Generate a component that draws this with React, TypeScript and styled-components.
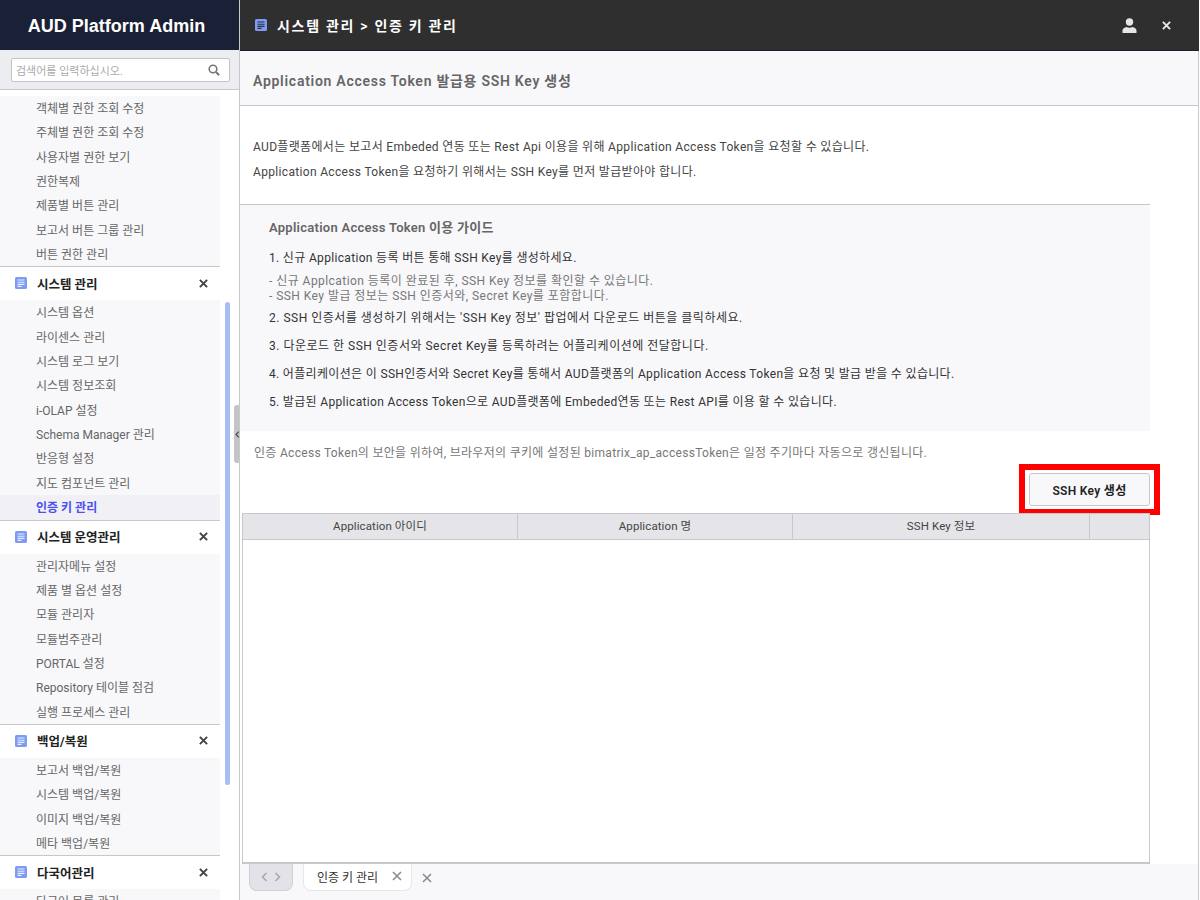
import styled, { createGlobalStyle } from "styled-components";

const GlobalStyle = createGlobalStyle`
  html, body {
    margin: 0;
    padding: 0;
    height: 100%;
    overflow: hidden;
    background: #fff;
  }
  * {
    box-sizing: border-box;
  }
  body {
    font-family: Roboto, "Noto Sans CJK KR", sans-serif;
    font-size: 12px;
    color: #333;
  }
  ul, ol {
    list-style: none;
    margin: 0;
    padding: 0;
  }
  p, h1, h2, h3 {
    margin: 0;
  }
`;

const Layout = styled.div`
  display: flex;
  width: 1199px;
  height: 900px;
  overflow: hidden;
`;

const Sidebar = styled.aside`
  position: relative;
  flex: 0 0 240px;
  display: flex;
  flex-direction: column;
  border-right: 1px solid #c8c8cc;
  overflow: hidden;
`;

const Brand = styled.div`
  flex: 0 0 50px;
  display: flex;
  align-items: center;
  justify-content: center;
  padding: 2px 6px 0 0;
  background: #1a2035;
  color: #fff;
  font-family: "Liberation Sans", Arial, sans-serif;
  font-size: 18px;
  font-weight: 700;
`;

const SearchArea = styled.div`
  flex: 0 0 40px;
  padding: 8px 9px 7px 11px;
  background: #ecedf1;
  border-bottom: 1px solid #c8c8cc;
`;

const SearchBox = styled.div`
  height: 24px;
  display: flex;
  align-items: center;
  justify-content: space-between;
  padding: 0 9px 0 4px;
  background: #fff;
  border: 1px solid #c4c4c8;
  border-radius: 2px;
  color: #aaa;
  font-size: 11px;
`;

const MenuScroll = styled.div`
  padding-top: 6px;
`;

const SubList = styled.ul`
  width: 220px;
  background: #f8f8fb;
`;

const SubItem = styled.li<{ $active?: boolean }>`
  height: 24.35px;
  line-height: 26px;
  padding-left: 36px;
  font-size: 12px;
  white-space: nowrap;
  color: ${(p) => (p.$active ? "#4a50f0" : "#666")};
  font-weight: ${(p) => (p.$active ? 600 : 400)};
  background: ${(p) => (p.$active ? "#f1f1f5" : "transparent")};
`;

const GroupHeader = styled.div`
  width: 220px;
  height: 34px;
  display: flex;
  align-items: center;
  gap: 10px;
  padding: 0 12px 1px 15px;
  background: #fff;
  border-top: 1px solid #c8c8cc;
  color: #222;
  font-size: 12.5px;
  font-weight: 700;
`;

const GroupName = styled.span`
  flex: 1;
`;

const ScrollThumb = styled.div`
  position: absolute;
  left: 225px;
  top: 302px;
  width: 5px;
  height: 483px;
  background: #a9bdf5;
  border-radius: 3px;
`;

const CollapseHandle = styled.div`
  position: absolute;
  left: 234px;
  top: 405px;
  width: 6px;
  height: 58px;
  display: flex;
  align-items: center;
  justify-content: center;
  background: #c4c4c8;
  border-radius: 3px 0 0 3px;
`;

const Main = styled.main`
  flex: 1;
  min-width: 0;
  display: flex;
  flex-direction: column;
`;

const TopBar = styled.header`
  flex: 0 0 51px;
  display: flex;
  align-items: center;
  gap: 10px;
  padding: 0 28px 0 15px;
  background: #2f2f2f;
  border-bottom: 1px solid #1a2035;
  color: #fff;
  font-size: 14px;
  font-weight: 600;
`;

const Crumb = styled.span`
  flex: 1;
  letter-spacing: 1.7px;
`;

const TopIcons = styled.div`
  display: flex;
  align-items: center;
  gap: 25px;
`;

const Body = styled.div`
  flex: 1;
  min-height: 0;
  display: flex;
  flex-direction: column;
  border-right: 1px solid #c8c8cc;
`;

const TitleRow = styled.div`
  flex: 0 0 55px;
  display: flex;
  align-items: center;
  padding: 4px 12px 0 13px;
  background: #f8f8fb;
  border-bottom: 1px solid #c8c8cc;
  color: #666;
  font-size: 14px;
  font-weight: 600;
  letter-spacing: 0.73px;
`;

const Content = styled.div`
  flex: 1;
  min-height: 0;
  display: flex;
  flex-direction: column;
  padding-right: 48px;
  letter-spacing: 0.33px;
`;

const Intro = styled.div`
  height: 99px;
  border-bottom: 1px solid #c8c8cc;
  padding: 29px 0 0 13px;
  color: #444;
  line-height: 25px;
  font-size: 12px;
`;

const Guide = styled.section`
  height: 226px;
  padding: 12px 0 0 29px;
  background: #f8f8fb;
`;

const GuideTitle = styled.h3`
  color: #666;
  font-size: 13px;
  font-weight: 600;
  line-height: 22px;
  margin-bottom: 10px;
  letter-spacing: 0.27px;
`;

const Step = styled.p<{ $wide?: boolean }>`
  color: #333;
  font-size: 12px;
  line-height: 18px;
  margin-bottom: 10px;
  letter-spacing: ${(p) => (p.$wide ? "0.5px" : "inherit")};
`;

const StepNote = styled.ul`
  color: #777;
  font-size: 12px;
  line-height: 15px;
  margin: -3px 0 5px;
  letter-spacing: 0.45px;
`;

const Note = styled.p`
  padding: 14px 0 0 14px;
  height: 33px;
  color: #777;
  font-size: 12px;
  line-height: 17px;
  letter-spacing: 0.3px;
`;

const Actions = styled.div`
  display: flex;
  justify-content: flex-end;
  margin-right: -10px;
`;

const Highlight = styled.div`
  display: flex;
  padding: 3px 4px 3px 4px;
  border: 6px solid #ff0000;
`;

const SmallButton = styled.button`
  width: 121px;
  height: 33px;
  background: #f8f8fb;
  border: 1px solid #c8c8cc;
  border-radius: 3px;
  color: #222;
  font-family: inherit;
  font-size: 12px;
  font-weight: 600;
  letter-spacing: 0.3px;
`;

const Table = styled.div`
  flex: 1;
  min-height: 0;
  margin-left: 2px;
  margin-top: -2px;
  border: 1px solid #c8c8cc;
  border-bottom: 2px solid #c8c8cc;
`;

const TableHead = styled.div`
  height: 26px;
  display: grid;
  grid-template-columns: 275px 275px 297px 1fr;
  background: #e4e4e9;
  border-bottom: 1px solid #c8c8cc;
`;

const HeadCell = styled.div`
  display: flex;
  align-items: center;
  justify-content: center;
  padding-bottom: 3px;
  border-right: 1px solid #c8c8cc;
  color: #444;
  font-size: 11.5px;
  letter-spacing: 0.1px;

  &:last-child {
    border-right: 0;
  }
`;

const TabBar = styled.footer`
  flex: 0 0 36px;
  display: flex;
  align-items: flex-start;
  padding-left: 9px;
  background: #f8f8fb;
`;

const TabNav = styled.div`
  width: 44px;
  height: 27px;
  display: flex;
  align-items: center;
  justify-content: center;
  gap: 6px;
  margin-right: 10px;
  background: #e2e2e8;
  border: 1px solid #d0d0d6;
  border-top: 0;
  border-radius: 0 0 8px 8px;
`;

const Tab = styled.div`
  width: 109px;
  height: 27px;
  display: flex;
  align-items: center;
  justify-content: space-between;
  padding: 0 9px 2px 13px;
  background: #fff;
  border: 1px solid #e6e6ea;
  border-top: 0;
  border-radius: 0 0 8px 8px;
  color: #333;
  font-size: 12px;
`;

const CloseAll = styled.div`
  height: 27px;
  display: flex;
  align-items: center;
  margin-left: 10px;
`;

function DocIcon({ line = "#e8edfd" }: { line?: string }) {
  return (
    <svg width="12" height="12" viewBox="0 0 12 12">
      <rect width="12" height="12" rx="1.5" fill="#7d9bf5" />
      <path d="M2.5 3h7M2.5 5.2h7M2.5 7.4h7M2.5 9.4h4" stroke={line} strokeWidth="1.1" />
    </svg>
  );
}

function CrossIcon({ size = 9, color = "#444", width = 2.2 }: { size?: number; color?: string; width?: number }) {
  return (
    <svg width={size} height={size} viewBox="0 0 10 10">
      <path d="M1 1l8 8M9 1l-8 8" stroke={color} strokeWidth={width} fill="none" />
    </svg>
  );
}

function SearchIcon() {
  return (
    <svg width="12" height="12" viewBox="0 0 12 12">
      <circle cx="5" cy="5" r="3.8" stroke="#777" strokeWidth="1.6" fill="none" />
      <path d="M8 8l3.2 3.2" stroke="#777" strokeWidth="2" />
    </svg>
  );
}

function UserIcon() {
  return (
    <svg width="15" height="15" viewBox="0 0 15 15">
      <circle cx="7.5" cy="4" r="3.7" fill="#e6e6e6" />
      <path d="M0.5 15v-2.4c0-2 2-3.2 4-3.6 1.6 1 4.4 1 6 0 2 .4 4 1.6 4 3.6V15z" fill="#e6e6e6" />
    </svg>
  );
}

function Chevron({ dir, color, size = 10 }: { dir: "left" | "right"; color: string; size?: number }) {
  return (
    <svg width={size * 0.7} height={size} viewBox="0 0 7 10">
      <path d={dir === "left" ? "M5.5 1L1.5 5l4 4" : "M1.5 1l4 4-4 4"} stroke={color} strokeWidth="1.6" fill="none" />
    </svg>
  );
}

const menu = [
  {
    items: [
      "객체별 권한 조회 수정",
      "주체별 권한 조회 수정",
      "사용자별 권한 보기",
      "권한복제",
      "제품별 버튼 관리",
      "보고서 버튼 그룹 관리",
      "버튼 권한 관리",
    ],
  },
  {
    title: "시스템 관리",
    items: [
      "시스템 옵션",
      "라이센스 관리",
      "시스템 로그 보기",
      "시스템 정보조회",
      "i-OLAP 설정",
      "Schema Manager 관리",
      "반응형 설정",
      "지도 컴포넌트 관리",
      "인증 키 관리",
    ],
  },
  {
    title: "시스템 운영관리",
    items: [
      "관리자메뉴 설정",
      "제품 별 옵션 설정",
      "모듈 관리자",
      "모듈범주관리",
      "PORTAL 설정",
      "Repository 테이블 점검",
      "실행 프로세스 관리",
    ],
  },
  {
    title: "백업/복원",
    items: ["보고서 백업/복원", "시스템 백업/복원", "이미지 백업/복원", "메타 백업/복원"],
  },
  {
    title: "다국어관리",
    items: ["다국어 목록 관리"],
  },
];

const columns = ["Application 아이디", "Application 명", "SSH Key 정보", ""];

function App() {
  return (
    <Layout>
      <GlobalStyle />
      <Sidebar>
        <Brand>AUD Platform Admin</Brand>
        <SearchArea>
          <SearchBox>
            검색어를 입력하십시오.
            <SearchIcon />
          </SearchBox>
        </SearchArea>
        <MenuScroll>
          {menu.map((group, i) => (
            <div key={i}>
              {group.title && (
                <GroupHeader>
                  <DocIcon />
                  <GroupName>{group.title}</GroupName>
                  <CrossIcon />
                </GroupHeader>
              )}
              <SubList>
                {group.items.map((item) => (
                  <SubItem key={item} $active={item === "인증 키 관리"}>
                    {item}
                  </SubItem>
                ))}
              </SubList>
            </div>
          ))}
        </MenuScroll>
        <ScrollThumb />
        <CollapseHandle>
          <Chevron dir="left" color="#444" size={7} />
        </CollapseHandle>
      </Sidebar>
      <Main>
        <TopBar>
          <DocIcon line="#2f2f2f" />
          <Crumb>시스템 관리 &gt; 인증 키 관리</Crumb>
          <TopIcons>
            <UserIcon />
            <CrossIcon size={9} color="#e6e6e6" />
          </TopIcons>
        </TopBar>
        <Body>
          <TitleRow>Application Access Token 발급용 SSH Key 생성</TitleRow>
          <Content>
            <Intro>
              <p>AUD플랫폼에서는 보고서 Embeded 연동 또는 Rest Api 이용을 위해 Application Access Token을 요청할 수 있습니다.</p>
              <p>Application Access Token을 요청하기 위해서는 SSH Key를 먼저 발급받아야 합니다.</p>
            </Intro>
            <Guide>
              <GuideTitle>Application Access Token 이용 가이드</GuideTitle>
              <Step>1. 신규 Application 등록 버튼 통해 SSH Key를 생성하세요.</Step>
              <StepNote>
                <li>- 신규 Applcation 등록이 완료된 후, SSH Key 정보를 확인할 수 있습니다.</li>
                <li>- SSH Key 발급 정보는 SSH 인증서와, Secret Key를 포함합니다.</li>
              </StepNote>
              <Step $wide>2. SSH 인증서를 생성하기 위해서는 'SSH Key 정보' 팝업에서 다운로드 버튼을 클릭하세요.</Step>
              <Step $wide>3. 다운로드 한 SSH 인증서와 Secret Key를 등록하려는 어플리케이션에 전달합니다.</Step>
              <Step>4. 어플리케이션은 이 SSH인증서와 Secret Key를 통해서 AUD플랫폼의 Application Access Token을 요청 및 발급 받을 수 있습니다.</Step>
              <Step>5. 발급된 Application Access Token으로 AUD플랫폼에 Embeded연동 또는 Rest API를 이용 할 수 있습니다.</Step>
            </Guide>
            <Note>인증 Access Token의 보안을 위하여, 브라우저의 쿠키에 설정된 bimatrix_ap_accessToken은 일정 주기마다 자동으로 갱신됩니다.</Note>
            <Actions>
              <Highlight>
                <SmallButton>SSH Key 생성</SmallButton>
              </Highlight>
            </Actions>
            <Table>
              <TableHead>
                {columns.map((c, i) => (
                  <HeadCell key={i}>{c}</HeadCell>
                ))}
              </TableHead>
            </Table>
          </Content>
          <TabBar>
            <TabNav>
              <Chevron dir="left" color="#a8a8ae" size={10} />
              <Chevron dir="right" color="#a8a8ae" size={10} />
            </TabNav>
            <Tab>
              인증 키 관리
              <CrossIcon size={10} color="#8a8a90" width={1.6} />
            </Tab>
            <CloseAll>
              <CrossIcon size={10} color="#8a8a90" width={1.6} />
            </CloseAll>
          </TabBar>
        </Body>
      </Main>
    </Layout>
  );
}

export default App;
